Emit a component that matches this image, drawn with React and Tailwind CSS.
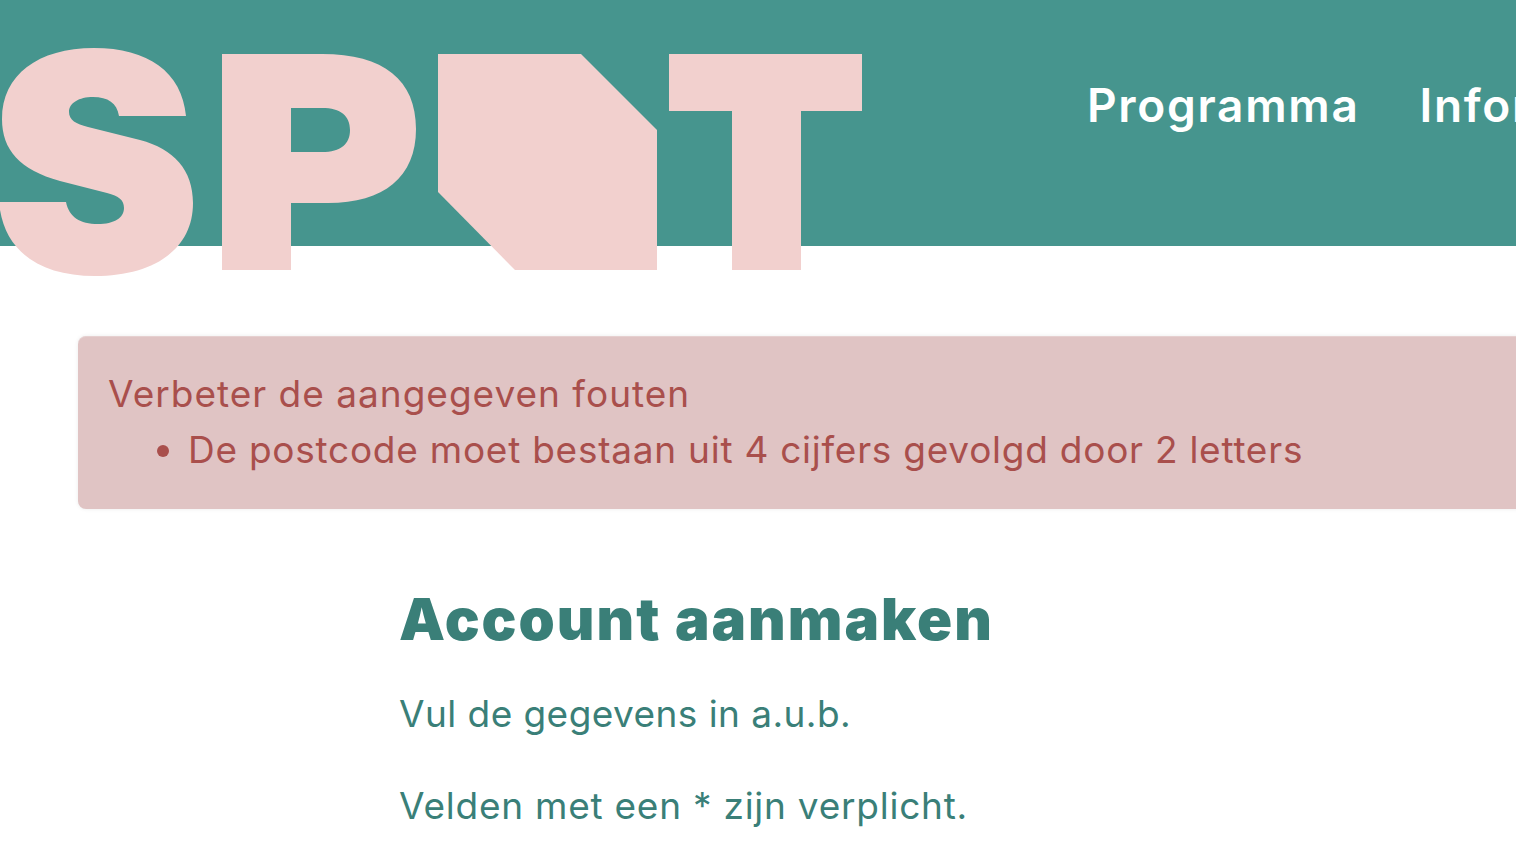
function Logo() {
  return (
    <svg className="block shrink-0 overflow-visible" width="862" height="228" viewBox="0 48 862 228" aria-label="SPOT logo" role="img">
      <g fill="#f2d0ce" fillRule="evenodd">
        <path d="M94 48C148 48 182 72 186 116H119C117 103 108 97 93 97C79 97 69 103 69 112C69 120 76 124 88 127L140 140C174 149 193 170 193 203C193 250 153 276 95 276C38 276 3 250 -1 202H66C69 217 80 224 98 224C114 224 124 218 124 208C124 200 119 196 107 193L60 181C20 170 2 150 2 119C2 75 38 48 94 48Z" />
        <path d="M222 54H322C384 54 416 80 416 129C416 177 384 203 328 203H291V270H222ZM291 108V152H322C341 152 350 144 350 130C350 116 341 108 322 108Z" />
        <polygon points="438,54 581,54 657,130 657,270 515,270 438,192" />
        <polygon points="669,54 862,54 862,111 801,111 801,270 732,270 732,111 669,111" />
      </g>
    </svg>
  );
}

export default function App() {
  return (
    <div className="w-[1516px] h-[864px] overflow-hidden bg-white font-['Inter','Noto_Sans',sans-serif]">
      <header className="h-[246px] bg-[#46958e] flex items-start pt-12">
        <Logo />
        <nav className="flex shrink-0 gap-[60px] ml-[225px] mt-[29px] text-[46px] leading-[56px] font-semibold text-white whitespace-nowrap tracking-[1.7px]">
          <a>Programma</a>
          <a>Informatie</a>
        </nav>
      </header>
      <main className="pt-[90px] pl-[78px]">
        <div className="w-[1500px] h-[173px] rounded-lg bg-[#e0c4c4] border-t border-[#e6d0d0] shadow-[0_0_4px_rgba(0,0,0,0.08)] pl-[30px] pt-[29px] text-[37px] leading-[56px] text-[#a94f4c]">
          <p className="tracking-[1px]">Verbeter de aangegeven fouten</p>
          <ul className="list-disc pl-[80px] tracking-[0.75px]">
            <li>De postcode moet bestaan uit 4 cijfers gevolgd door 2 letters</li>
          </ul>
        </div>
        <section className="pl-[321px] pt-[77px] text-[#3a7f78]">
          <h1 className="text-[58px] leading-[66px] font-black tracking-[2px]">Account aanmaken</h1>
          <p className="mt-[34px] text-[37px] leading-[56px] tracking-[0.44px]">Vul de gegevens in a.u.b.</p>
          <p className="mt-9 text-[37px] leading-[56px] tracking-[0.76px]">Velden met een * zijn verplicht.</p>
        </section>
      </main>
    </div>
  );
}
